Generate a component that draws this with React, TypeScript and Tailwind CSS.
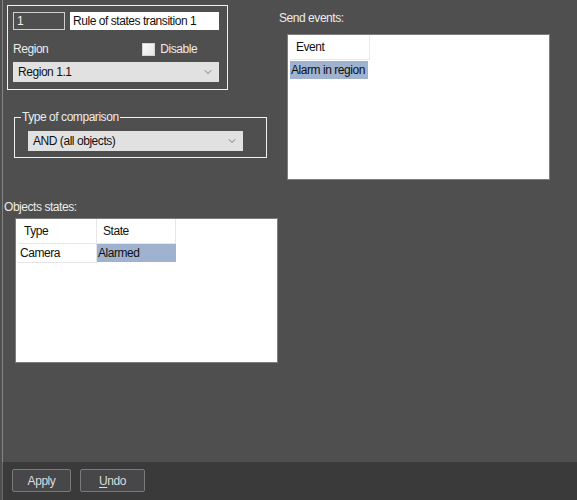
import { ChevronDown } from 'lucide-react'

const font = "font-['Liberation_Sans',Arial,sans-serif] text-[12px] tracking-[-0.45px]"

function Select({ value, width }: { value: string; width: string }) {
  return (
    <div className={`${width} h-[20px] bg-[#e1e1e1] flex items-center justify-between pl-[5px] pr-[5px] text-[#111]`}>
      <span>{value}</span>
      <ChevronDown size={12} strokeWidth={1.3} className="text-[#444]" />
    </div>
  )
}

export default function App() {
  return (
    <div className={`w-[577px] h-[500px] bg-[#4f4f4f] flex flex-col ${font}`}>
      <div className="flex-1 flex border-l border-[#858585] ml-[2px]">
        {/* left column */}
        <div className="w-[277px] flex flex-col">
          <div className="mt-[5px] ml-[4px] w-[221px] h-[85px] border border-[#f2f2f2] flex flex-col pt-[6px] pl-[5px]">
            <div className="flex gap-[5px]">
              <div className="w-[52px] h-[18px] border border-[#cfcfcf] bg-[#4f4f4f] text-[#f0f0f0] pl-[3px] leading-[16px]">1</div>
              <div className="w-[149px] h-[18px] bg-white text-[#111] pl-[3px] leading-[18px]">Rule of states transition 1</div>
            </div>
            <div className="flex items-center h-[32px] pt-[6px] text-[#ececec]">
              <span>Region</span>
              <div className="ml-[94px] w-[13px] h-[13px] border border-[#d4d4d4] bg-gradient-to-br from-[#fafafa] to-[#e6e6e6]" />
              <span className="ml-[5px]">Disable</span>
            </div>
            <Select value="Region 1.1" width="w-[206px]" />
          </div>

          <fieldset className="mt-[20px] ml-[11px] w-[253px] h-[48px] border border-[#f2f2f2]">
            <legend className="ml-[6px] px-[1px] text-[#ececec] leading-[14px]">Type of comparison</legend>
            <div className="mt-[7px] ml-[13px]">
              <Select value="AND (all objects)" width="w-[215px]" />
            </div>
          </fieldset>

          <div className="mt-[42px] ml-[1px] text-[#ececec] leading-[14px]">Objects states:</div>
          <div className="mt-[4px] ml-[12px] w-[263px] h-[145px] bg-white border border-[#7d7d7d] pl-[2px]">
            <div className="flex text-[#111]">
              <div className="w-[79px] h-[25px] border-r border-b border-[#e6e6e6] pl-[6px] leading-[24px]">Type</div>
              <div className="w-[79px] h-[25px] border-r border-b border-[#e6e6e6] pl-[6px] leading-[24px]">State</div>
            </div>
            <div className="flex text-[#111]">
              <div className="w-[79px] h-[19px] border-r border-b border-[#e6e6e6] pl-[2px] leading-[18px]">Camera</div>
              <div className="w-[79px] h-[18px] bg-[#9fb3d1] pl-[1px] leading-[18px]">Alarmed</div>
            </div>
          </div>
        </div>

        {/* right column */}
        <div className="flex flex-col">
          <div className="mt-[11px] ml-[-1px] text-[#ececec] leading-[14px]">Send events:</div>
          <div className="mt-[9px] ml-[7px] w-[263px] h-[146px] bg-white border border-[#7d7d7d] pl-[2px]">
            <div className="w-[80px] h-[25px] border-r border-b border-[#eaeaea] pl-[6px] leading-[24px] text-[#111]">Event</div>
            <div className="w-[78px] h-[18px] mt-[1px] bg-[#9fb3d1] pl-[1px] leading-[18px] text-[#111]">Alarm in region</div>
          </div>
        </div>
      </div>

      {/* bottom bar */}
      <div className="h-[38px] bg-[#3b3a3a] flex items-center gap-[10px] pl-[11px] pb-[1px] border-l border-[#6a6a6a] ml-[2px]">
        <button className="w-[59px] h-[23px] ml-[-2px] bg-[#474649] border border-[#7a7a7a] rounded-[2px] text-[#dcdcdc]">Apply</button>
        <button className="w-[65px] h-[23px] ml-[-1px] bg-[#474649] border border-[#7a7a7a] rounded-[2px] text-[#dcdcdc]">
          <span className="underline underline-offset-2">U</span>ndo
        </button>
      </div>
    </div>
  )
}
